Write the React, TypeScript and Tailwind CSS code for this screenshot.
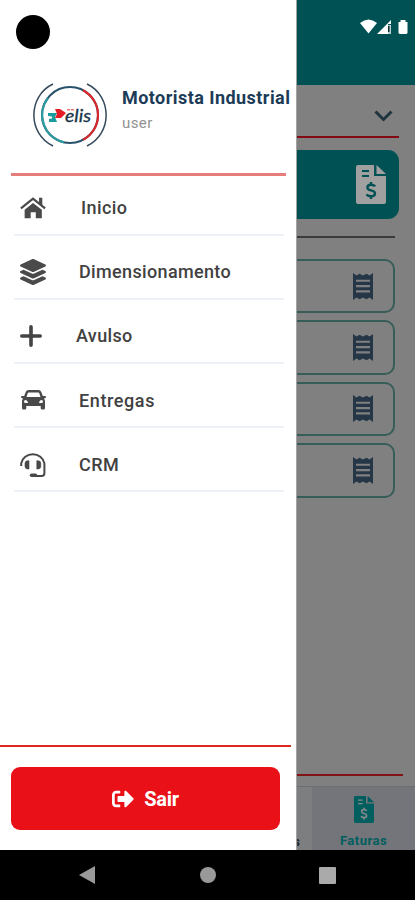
import type { ReactNode } from "react";
import { FaLayerGroup, FaSignOutAlt } from "react-icons/fa";

function HomeIcon() {
  return (
    <svg width="28" height="24" viewBox="0 0 28 24" fill="#4a4a4a">
      <path d="M1 12.500 14 2 27 12.500" fill="none" stroke="#4a4a4a" strokeWidth="2.400" />
      <path d="M20.500 1H24v9l-3.500-3Z" />
      <path d="M14 6.500 23.500 14v9H17v-6.500h-5.500V23H5v-9Z" />
    </svg>
  );
}

function CarIcon() {
  return (
    <svg width="25" height="20" viewBox="0 0 25 20" fill="#4a4a4a">
      <path
        fillRule="evenodd"
        d="M7.500 0h10q2 0 2.800 2l1.500 4H24q1 0 1 1t-1 1.200l-1.200.3q1.200 1 1.200 2.500v7q0 1.500-1.500 1.500H21q-1.300 0-1.300-1.500V16H5.300v2q0 1.500-1.300 1.500H2.500Q1 19.500 1 18v-7q0-1.500 1.200-2.500L1 8.200Q0 8 0 7t1-1h2.200l1.500-4q.8-2 2.800-2Zm.3 2.400q-.8 0-1.100.8L5.500 7h14l-1.200-3.800q-.3-.8-1.100-.8ZM4.500 10a1.500 1.500 0 1 0 0 3h2q.8 0 .3-1-.8-2-2.300-2Zm16 0q-1.500 0-2.300 2-.5 1 .3 1h2a1.500 1.500 0 0 0 0-3Z"
      />
    </svg>
  );
}

function HeadsetIcon() {
  return (
    <svg width="26" height="27" viewBox="0 0 26 27" fill="none" stroke="#484848" strokeWidth="2">
      <path d="M1.200 15v-2.600A11.800 11.200 0 0 1 24.400 12.400V22.200Q24.400 25 21.600 25H13" />
      <path d="M11.500 24.200h4" strokeWidth="3.400" strokeLinecap="round" />
      <path d="M9 9.700H7.800Q5 9.700 5 12.400v2.900q0 2.700 2.800 2.700H9Z" fill="#484848" strokeWidth="0.600" />
      <path d="M16.800 9.700h1.200q2.800 0 2.800 2.700v2.900q0 2.700-2.800 2.700h-1.200Z" fill="#484848" strokeWidth="0.600" />
    </svg>
  );
}

function PlusIcon() {
  return (
    <svg className="mr-1" width="22" height="22" viewBox="0 0 22 22" stroke="#444" strokeWidth="3.600" strokeLinecap="round">
      <path d="M11 1.800v18.400M1.800 11h18.400" />
    </svg>
  );
}

function ReceiptIcon() {
  return (
    <svg width="20" height="27" viewBox="0 0 20 28" preserveAspectRatio="none" fill="#253746">
      <path
        fillRule="evenodd"
        d="M0 0 3.500 2.500 6.500 .7 10 2.500 13.500 .7 16.500 2.500 20 0V28L16.500 25.500 13.500 27.300 10 25.500 6.500 27.300 3.500 25.500 0 28ZM3 7v2.200h14V7Zm0 5.500v2.200h14v-2.200ZM3 18v2.200h14V18Z"
      />
    </svg>
  );
}

function InvoiceIcon({ className, cut }: { className: string; cut: string }) {
  return (
    <svg className={className} viewBox="0 0 30 39" preserveAspectRatio="none" fill="currentColor">
      <path d="M2 0h16v11h12v26q0 2-2 2H2q-2 0-2-2V2q0-2 2-2Z" />
      <path d="M20.500 0 30 9H20.500Z" />
      <path d="M6 6h7M6 11h7" stroke={cut} strokeWidth="2" />
      <path d="M19 21.500Q18.200 19.700 15 19.700q-3.600 0-3.600 2.700 0 2.100 3.600 2.900 4 .8 4 3.200 0 2.700-4 2.700-3.400 0-4.300-2M15 17v2.700m0 11.500V34" fill="none" stroke={cut} strokeWidth="2.400" />
    </svg>
  );
}

function Logo() {
  return (
    <svg width="74" height="64" viewBox="0 0 74 64" fill="none">
      <path d="M20 1C-5.500 13-5.500 51 20 63" stroke="#34495b" strokeWidth="1.500" />
      <path d="M54 1C79.500 13 79.500 51 54 63" stroke="#34495b" strokeWidth="1.500" />
      <circle cx="37" cy="32" r="28" stroke="#28526b" strokeWidth="2" />
      <path d="M15 15A28 28 0 0 0 31 59.400" stroke="#2b9ba0" strokeWidth="2.200" />
      <path d="M50 7.200A28 28 0 0 1 50 56.800" stroke="#d9282c" strokeWidth="2.200" />
      <path d="M15 30h9l-2 4 2 5h-8v-3l3-.5v-2l-4-.5Z" fill="#1b9b9b" />
      <path d="M22 26h5l6 4-5 5h-6l2-4Z" fill="#e51c24" />
      <path d="M34 26h3v1.500h-3Zm4 0h3v1.500h-3Z" fill="#ee7073" />
      <text x="32" y="38.800" fill="#17344a" stroke="#17344a" strokeWidth=".3" fontFamily="Lato, sans-serif" fontStyle="italic" fontSize="17" fontWeight="400" textLength="26" lengthAdjust="spacingAndGlyphs">elis</text>
    </svg>
  );
}

function Row({ icon, label, className }: { icon: ReactNode; label: string; className: string }) {
  return (
    <li className="ml-[14px] flex h-[64.200px] w-[270px] items-center border-b-2 border-[#edf0f6] pt-[10px]">
      <span className="ml-[6px] flex w-[26px] justify-center text-[#4a4a4a]">{icon}</span>
      <span className={`${className} text-[18px] font-medium text-[#414141]`}>{label}</span>
    </li>
  );
}

export default function App() {
  return (
    <div className="relative flex h-[900px] w-[415px] flex-col overflow-hidden bg-[#808080] font-[Roboto,sans-serif]">
      <header className="flex h-[85px] shrink-0 items-start justify-end bg-[#005154] pr-[6px] pt-[19px]">
        <svg width="49" height="16" viewBox="0 0 49 16" fill="#fff">
          <path d="M0 4Q8.500-3 17 4L8.500 14.500Z" />
          <path d="M17 15 31 1v4h-3v10Z" />
          <path d="M28 6h3v9h-3Z" fill="#b6cccd" />
          <path d="M28 7h1.500v6H28Z" fill="#102f32" />
          <path d="M38.500 3h2V1h5v2h2v11l-1 1h-7l-1-1Z" />
        </svg>
      </header>
      <main className="flex h-[701px] shrink-0 flex-col pl-4">
        <div className="flex h-[53px] w-[383px] shrink-0 items-center justify-end border-b-2 border-[#810b12] pr-[6px] pt-[11px]">
          <svg width="19" height="12" viewBox="0 0 19 12" fill="none" stroke="#203440" strokeWidth="3">
            <path d="m1.500 1.500 8 8 8-8" />
          </svg>
        </div>
        <div className="mt-3 flex h-[69px] w-[383px] shrink-0 items-center justify-end rounded-[11px] bg-[#005154] pr-[13px]">
          <InvoiceIcon className="h-[39px] w-[30px] text-[#a0a0a0]" cut="#005154" />
        </div>
        <div className="mt-[17px] h-0.5 w-[379px] shrink-0 bg-[#3b3b3b]" />
        <div className="mt-[21px] flex flex-col gap-[7px]">
          {[0, 1, 2, 3].map((item) => (
            <div key={item} className="flex h-[54.400px] w-[379px] items-center justify-end rounded-[10px] border-2 border-[#375d58] pr-5">
              <ReceiptIcon />
            </div>
          ))}
        </div>
        <div className="mt-auto mb-[10px] h-0.5 w-[387px] bg-[#811216]" />
      </main>
      <div className="flex h-16 shrink-0 justify-end border-t border-[#6e6e72] bg-[#7d7e80]">
        <span className="flex items-end pb-0.5 pr-[12px] text-[13px] font-bold leading-none text-[#202426]">s</span>
        <div className="flex w-[103px] flex-col items-center bg-[#74747b] pt-[9px]">
          <InvoiceIcon className="h-[27px] w-5 text-[#005f5e]" cut="#84898d" />
          <span className="mt-[10px] text-[13px] font-bold leading-[15px] tracking-[.5px] text-[#005f5e]">Faturas</span>
        </div>
      </div>
      <nav className="flex h-[50px] shrink-0 items-center bg-black">
        <svg className="ml-[79px]" width="17" height="18" viewBox="0 0 17 18" fill="#999"><path d="M0 9 16 0v18Z" /></svg>
        <span className="ml-[104px] size-4 rounded-full bg-[#999]" />
        <span className="ml-[103px] size-[17px] rounded-[1px] bg-[#aaa]" />
      </nav>
      <aside className="absolute left-0 top-0 flex h-[850px] w-[297px] flex-col border-r border-[#a3a3a3] bg-white">
        <span className="ml-4 mt-[15px] size-[34px] shrink-0 rounded-full bg-black" />
        <div className="ml-[33px] mt-[34px] flex h-[66px] shrink-0">
          <Logo />
          <div className="ml-[15px] pt-[3px]">
            <p className="whitespace-nowrap text-[18px] font-bold leading-6 tracking-[.450px] text-[#1c3b56]">Motorista Industrial</p>
            <p className="mt-[1px] text-[15px] leading-6 tracking-[.4px] text-[#929292]">user</p>
          </div>
        </div>
        <div className="ml-[11px] mt-[24px] h-[2.500px] w-[275px] shrink-0 bg-[#e77c7c]" />
        <ul className="-mt-[4px]">
          <Row icon={<HomeIcon />} label="Inicio" className="ml-[35px] tracking-[.4px]" />
          <Row icon={<FaLayerGroup className="size-[26px]" />} label="Dimensionamento" className="ml-[33px] tracking-[.350px]" />
          <Row icon={<PlusIcon />} label="Avulso" className="ml-[30px] tracking-[.350px]" />
          <Row icon={<CarIcon />} label="Entregas" className="ml-[33px] tracking-[.6px]" />
          <Row icon={<HeadsetIcon />} label="CRM" className="ml-[33px] tracking-[.4px]" />
        </ul>
        <div className="mt-auto h-0.5 w-[291px] shrink-0 bg-[#db2922]" />
        <button className="mb-5 ml-[11px] mt-[20px] flex h-[63px] w-[269px] shrink-0 items-center justify-center gap-[10px] rounded-[9px] bg-[#ea1018] text-[20px] font-bold text-white">
          <FaSignOutAlt className="size-[22px]" />
          <span className="tracking-[-.3px]">Sair</span>
        </button>
      </aside>
    </div>
  );
}
